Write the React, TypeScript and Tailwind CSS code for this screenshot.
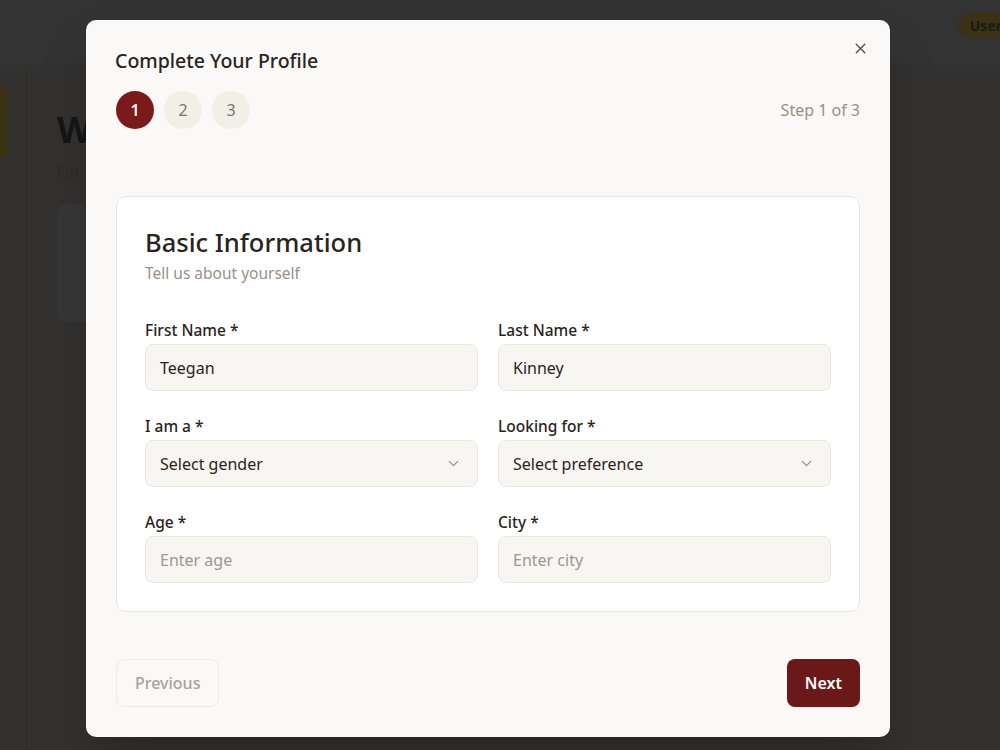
import React from 'react';
import { ChevronDown, X } from 'lucide-react';

const font = { fontFamily: '"Noto Sans", "Open Sans", sans-serif' };

interface FieldProps {
  label: string;
  value?: string;
  placeholder?: string;
  select?: boolean;
}

const Field: React.FC<FieldProps> = ({ label, value, placeholder, select }) => {
  return (
    <div className="flex flex-col">
      <label className="text-[15.5px] font-medium leading-[20px] text-[#2b2320] mb-[4px]">{label}</label>
      <div className="h-[47px] rounded-[8px] border border-[#ebe7e2] bg-[#f8f6f3] px-[14px] flex items-center justify-between">
        {value ? (
          <span className="text-[16px] text-[#2b2320]">{value}</span>
        ) : (
          <span className={select ? 'text-[16px] text-[#2b2320]' : 'text-[16px] text-[#a09790]'}>{placeholder}</span>
        )}
        {select && <ChevronDown size={17} strokeWidth={1.5} className="text-[#8f857d] mr-[1px]" />}
      </div>
    </div>
  );
};

const App: React.FC = () => {
  return (
    <div className="relative w-[1000px] h-[750px] overflow-hidden bg-[#323130]" style={font}>
      {/* dimmed page behind the dialog */}
      <div className="h-[66px] bg-[#333333] border-b border-[#2f2f2f] flex items-start justify-end pt-[13px]">
        <span className="h-[25px] px-[12px] rounded-full bg-[#3a3212] text-[14px] font-bold text-[#1c1a14] flex items-center -mr-[14px]">User</span>
      </div>
      <div className="flex h-[684px]">
        <div className="w-[27px] border-r border-[#2f2f2f] pt-[21px]">
          <div className="w-[8px] h-[70px] bg-[#3a3212] rounded-r-[6px]" />
        </div>
        <div className="w-[59px] pl-[30px] pt-[44px] overflow-hidden">
          <div className="text-[36px] font-bold leading-[40px] text-[#151515] whitespace-nowrap">W</div>
          <div className="text-[16px] text-[#2a2a2a] mt-[10px] whitespace-nowrap">Fin</div>
          <div className="mt-[20px] h-[118px] w-[400px] rounded-[10px] bg-[#363636]" />
        </div>
        <div className="flex-1" />
      </div>

      {/* dialog */}
      <div className="absolute left-[86px] top-[20px] w-[804px] h-[717px] rounded-[10px] bg-[#faf9f7] shadow-2xl px-[30px] pt-[27px] pb-[30px] flex flex-col">
        <button className="absolute right-[21px] top-[20px] text-[#4f4843]">
          <X size={17} strokeWidth={1.75} />
        </button>
        <h2 className="text-[19.5px] font-medium leading-[28px] text-[#2b2320] -ml-px">Complete Your Profile</h2>
        <div className="mt-[16px] flex items-center justify-between">
          <div className="flex gap-[10px]">
            <div className="w-[38px] h-[38px] rounded-full bg-[#7a1a1a] text-white text-[16px] font-semibold flex items-center justify-center">1</div>
            <div className="w-[38px] h-[38px] rounded-full bg-[#f2efe9] text-[#7d736b] text-[16px] flex items-center justify-center">2</div>
            <div className="w-[38px] h-[38px] rounded-full bg-[#f2efe9] text-[#7d736b] text-[16px] flex items-center justify-center">3</div>
          </div>
          <span className="text-[16px] text-[#9a8f86]">Step 1 of 3</span>
        </div>

        <div className="mt-[67px] rounded-[10px] border border-[#e9e5e0] bg-white px-[28px] pt-[28px] pb-[28px]">
          <h3 className="text-[25.5px] font-medium leading-[34px] text-[#2b2320]">Basic Information</h3>
          <p className="text-[15.5px] text-[#9a8f86] mt-[3px]">Tell us about yourself</p>
          <div className="mt-[35px] grid grid-cols-2 gap-x-[20px] gap-y-[25px]">
            <Field label="First Name *" value="Teegan" />
            <Field label="Last Name *" value="Kinney" />
            <Field label="I am a *" placeholder="Select gender" select />
            <Field label="Looking for *" placeholder="Select preference" select />
            <Field label="Age *" placeholder="Enter age" />
            <Field label="City *" placeholder="Enter city" />
          </div>
        </div>

        <div className="mt-auto flex items-center justify-between">
          <button className="h-[48px] px-[18px] rounded-[8px] border border-[#efebe7] text-[16px] font-medium text-[#a9a19a]">Previous</button>
          <button className="h-[48px] px-[18px] rounded-[8px] bg-[#6b1818] text-[16px] font-semibold text-white">Next</button>
        </div>
      </div>
    </div>
  );
};

export default App;
